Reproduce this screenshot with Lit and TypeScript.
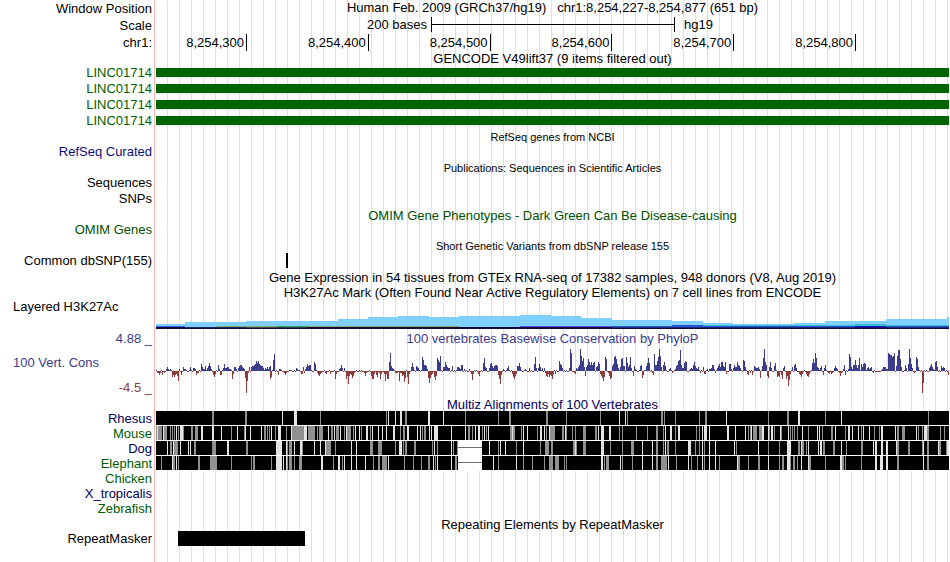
import { LitElement, html, svg, css, nothing } from "lit";
import { customElement, property } from "lit/decorators.js";
import { classMap } from "lit/directives/class-map.js";

/** Width of the browsed region in drawing units. */
const SPAN = 793;

/** Conservation scores: runs written as "start:score,score,...". */
const SCORES_UP = `5:1 10:2,4,2 14:2 23:2 27:4,2,2 34:4 37:3,3,2 45:7,4,2,2,5 50:1,3,5,8,5,2 62:6,2 66:1,3,7,3,3,4,4,2,2
78:4,4,2 82:3,5,6,6,4,3,2 93:4 95:4,5,5,6,7,10,8,10,7,6,5,5,3,1,3,2,4,2,4,5 116:1,11,17 123:2,2,1 134:1 140:3,2,1 147:4
149:2,4,7,5,6,6 158:9,7 183:2,3,6,3 188:3 233:9,18,5,3,2 250:1 255:4,8,1 257:4 260:5,4,3 266:14,11,6,6,5,2 281:13,11,9,15
287:4,4,9,6,4,3,3 296:5 300:1,4,4,3,2,6,6 308:2 313:2 327:8,13,4,3 333:3,7,8,5,3,5,6,6,5 347:2 351:3,5 361:5,5,8,4
369:2 373:3 378:7,14,3 382:3,7,4 386:3 388:3 403:10,7,6,3 413:3,22,18 420:3,2,4,6,22,15,10,13,4 430:4,6,12,9,6,9,6,8,9
440:4,5,9,7 449:14,12 456:5,7,14,15,12,7,3 464:4,12,13,5,5 470:14,8,4,6,14,3 478:5,2 484:5,6 489:1,5,8,13,8
498:17,6,6,10,14,22,15,4 507:6,9,5 513:2,3 519:2,5,6,10,11,21,6,3,3,8,10,9 534:2,3,2,6,9,5,3,2,4 547:4 551:2 553:2,2,3,6,6,2
561:3,5,7,4,9,9,5,4,9 573:7,7,2 577:3,6,4,4,9,6,5,3 587:11,10,4 598:5,4,3,3,4,2 606:5,13,22,9,6 613:4,9,3 618:5,8
627:3,5 635:1,4 638:6,7,3 656:8,12,8,18,13,4,3,1,3,5 668:3,6 678:3,5,3,2 687:2,6 692:2,17,14,4,2,6,6,11,6,3,6,13,1,7,4,7,8,7
711:3,4,2,3,4 726:2,4,4,4,2,2,18,17,16,16,14,15,18 740:5,15,21,21,12,4 749:6,3 752:7,22,13,7,3 760:14,12,4
773:3,5,7,4,2 779:9,10,4 785:5,3,4,3`;

const SCORES_DOWN = `1:2,2,4,2 6:4,1,2 16:6,4,6,4,3,5,10 25:4 40:4,2,2 57:4,6,3 64:4,4 76:8,3 89:7,22,10,2 114:8,6 122:4 127:1,2,4,2,1
137:1 145:3,3 148:2 161:2,4,5,3,2 169:2,3 174:3,1 179:8,3 190:8,5,13,5,3,4,7,5,2 208:2,5,2 214:1,5,8,8,3 220:4,6
223:2,8,3 228:3,10,3,8,8 239:2,2,2,1,10,2,2,5,4,11,7 251:6,13,3 272:7,12,7,4,3 278:6,9,5 315:3,9,3 322:3,5
342:4,8,13,4 356:3,6,8,5,3 389:2,5,6,3,6,4,5,8,3 399:3 409:1 418:2,3 429:5 444:3,5,7,10,6 452:2,5,8,7 477:5 486:7,4
496:2,4 516:2 544:2 548:3,3 559:2 570:3 591:3,4 594:2 596:4 604:7 611:5,7 621:6,5,6 625:4,8 630:8,5,15,9,3
643:3,4,6,3 650:3,5,6,3 667:4 672:2,3 675:3,2 683:2,5,2 689:4 716:1,2 720:1 723:1 758:2 766:22,12 792:4`;

/** Cells of an aligned species: shade, start and, when wider than one, width. */
const ALIGNED: { name: string; tone: string; cells?: string; gap?: boolean }[] = [
  {
    name: "Rhesus", tone: "navy",
    cells: `G56/2 G89/2 L126 L138/3 G164 G230 L232 L239 L244/2 G249/2 L272/2 L287 G309 G342 G353/2 G390/2 G410 G444 L463
      L469 G471 G505/2 G508 G519 G543 G549/2 L570 G612 G631/2 L642/2 G669 L685 G772`,
  },
  {
    name: "Mouse", tone: "green",
    cells: `G0 L1 G2/4 L7 G8/3 G14 G16 G18 L20 G22 L24/3 G27 G35/2 G39/3 L45/2 L56/2 L65 G75 L81 G88 L89 L94 L105 G108/2
      G111 G113 L115 G119 L122/3 G130 L135 G136/12 L148/3 G152/7 G161 G163/4 L172 G175/2 L178 G180/3 L184 G188 L190 G191/3
      G194 G197 L199 L203 G205 L210/2 G214 L216 L222 L226 L230 L237/2 G244 G247/2 L251/2 L261 L264 G266 G268/2 L273 L275
      L278/2 L280/2 L295 L309 G312/2 G316 L319 L322/2 G326 L328 G330 L332 G354/2 L356 G357/2 G365 L367 L371 G381 L384/2
      L388 G390 L393 G394/5 G406/2 L409 G410 G416 G419 G427/3 G439/2 L442 L445/3 L453/2 G463 G466 G480 G491 G500/2 G507
      L509 L514/2 G519 L522/2 G540 G543 L546 L548/3 L553 L571/2 L579 L589 G592 G594 L595 G597/4 G603/3 L606/2 L612 G613
      L615/2 G618 L624 G625 L632 G634 G636 G638 G641 L646 G652 L661 L663 G666 G675/2 L679 G689 L692/2 L696 L702 G705 L707
      L713 G718 G723 L725/2 L739 G741/2 G746/3 L760 G762 G766 L768/3 G771/2 G784 G788`,
  },
  {
    name: "Dog", tone: "navy", gap: true,
    cells: `L11 G14/2 L17 G18/3 G21 L24 L32 L34 G38/2 G56/4 L71/2 G90/2 L120/6 L130 G131 G133/3 L138 L144/2 G146 L158 L164
      L169 G170/5 G179 L195 L200 G214/3 G222/4 G239 L243/3 G247 G249/2 G258/2 G276 L278 G281 L295 G297 G301 L333 G342 L344
      L349 G360 L367 G384 G389/4 G395/2 G417/2 L419 G420 G427/3 L445/3 G454 G466 G475/3 L486 L496 G500/2 G507 L509 G511/2
      G519 L532/3 G539 G543 L546 G548 L553 L559 L578 G580 L602 G612 G623 L631/4 G642/2 L645 G646/2 G650 L652 L662 L664/2
      G667/2 G677/2 L685 G690 G705/2 L717 L719/2 L725/2 L730/2 L740 G741/2 G752/2 G766 L767 G771/2 L782 G783/2 G790 L791/2`,
  },
  {
    name: "Elephant", tone: "green", gap: true,
    cells: `G5 L16 G17/2 L20 G22 G42/2 G54 G55/6 G75 G95 G97/2 G115 L120/6 L127 L130 G131 G133/3 G138 G143/3 L165/2 G177
      L182/2 G186 L188 L195 L200 L209 G217 G222/2 G226 G227/4 L232 G248 G257 G265 G272/2 L277 G279 L281 L295 G299/2 L337
      G342 L360 G367 G376 G388 G393 G394/3 G399/4 G408 G410 L445/2 G448 G450/3 L464 G466 G476 L486 L496 G500/2 G505/6 L512
      G520 L532 G535 G541 L546 G548 L553 L559 G563 L581 G582/2 G592 G602/2 L612 G623 G626/2 L631/3 G634 G637/2 G641 L645
      L652 G653/2 G669 L684/2 G686/2 G689 G705 L719/2 L724/3 L730/2 G741/2 L767 G771/2`,
  },
  { name: "Chicken", tone: "green" },
  { name: "X_tropicalis", tone: "navy" },
  { name: "Zebrafish", tone: "green" },
];

/** Strongest H3K27Ac signal: [start, height above the track floor]. */
const SIGNAL: [number, number][] = [
  [0, 5], [29, 7], [90, 8], [182, 10], [212, 12], [242, 13], [273, 12], [303, 13], [364, 14], [395, 13], [425, 11],
  [456, 9], [516, 8], [547, 6], [577, 5], [638, 6], [669, 8], [730, 10], [791, 12],
];

/** Lower cell-line layers: [start, end, top, height, colour class]. */
const LAYERS: [number, number, number, number, string][] = [
  [0, 29, 27, 1, "blue"], [29, 90, 28, 1, "steel"], [60, 90, 27, 1, "olive"],
  [90, 121, 27, 2, "olive"], [121, 151, 27, 2, "leaf"], [151, 303, 27, 1, "olive"],
  [364, 456, 27, 1, "violet"], [456, 516, 27, 2, "royal"], [516, 547, 26, 3, "royal"],
  [547, 793, 26, 1, "teal"], [547, 793, 27, 2, "royal"],
  [699, 730, 25, 2, "teal"], [699, 730, 27, 2, "deep"],
];

const scores = (text: string): Map<number, number> => {
  const out = new Map<number, number>();
  for (const run of text.trim().split(/\s+/)) {
    const [start, list] = run.split(":");
    list.split(",").forEach((v, i) => out.set(Number(start) + i, Number(v)));
  }
  return out;
};

const bar = (x: number, y: number, w: number, h: number) => `M${x} ${y}h${w}v${h}h${-w}z`;

const shadePath = (cells: string, shade: string) =>
  cells.trim().split(/\s+/).filter((c) => c[0] === shade).map((c) => {
    const [x, w = "1"] = c.slice(1).split("/");
    return bar(Number(x), 0, Number(w), 14);
  }).join("");

@customElement("track-row")
class TrackRow extends LitElement {
  @property() label = "";
  @property() tone = "black";
  @property({ type: Boolean }) start = false;

  static styles = css`
    :host { display: grid; grid-template-columns: 154px minmax(0, 1fr); column-gap: 2px; }
    .label { padding-right: 2px; text-align: right; white-space: nowrap; }
    .start { padding-left: 13px; text-align: left; }
    .green { color: #005a00; }
    .gene { color: #006400; }
    .omim { color: #005000; }
    .navy { color: #00005a; }
    .curated { color: #0c0c78; }
    .up { color: #3c3c8c; }
  `;

  render() {
    return html`
      <div class=${classMap({ label: true, start: this.start, [this.tone]: true })}>
        <slot name="label">${this.label}</slot>
      </div>
      <div><slot></slot></div>`;
  }
}

@customElement("app-root")
class GenomeBrowser extends LitElement {
  static styles = css`
    :host {
      display: block;
      box-sizing: border-box;
      min-height: 100vh;
      padding-right: 1px;
      font: 13px/16px "Liberation Sans", Arial, sans-serif;
      color: #000;
      background:
        linear-gradient(#ffb4b4, #ffb4b4) 154px 0 / 1px 100% no-repeat,
        repeating-linear-gradient(90deg, transparent 0 11px, #dcdcf5 11px 12px) 156px 0 no-repeat,
        #fff;
    }
    svg { display: block; width: 100%; shape-rendering: crispEdges; }
    .head { line-height: 17px; }
    .position { line-height: 15px; text-align: center; white-space: nowrap; }
    .title { line-height: 15px; white-space: nowrap; }
    .center { padding-top: 2px; line-height: 13px; text-align: center; }
    .center.first { line-height: 12px; }
    .title.first { line-height: 14px; }
    .center.small { font-size: 11px; padding-top: 1px; line-height: 14px; }
    .center.up { padding-top: 0; line-height: 15px; }
    .omim { color: #005000; }
    .navy { color: #00005a; }
    .up { color: #3c3c8c; }
    .scale { display: grid; grid-template-columns: 275fr 244fr 274fr; line-height: 15px; }
    .bases { padding-right: 4px; text-align: right; }
    .assembly { padding-left: 9px; }
    .span { display: flex; align-items: center; border: solid #000; border-width: 0 1px; }
    .rule { flex: 1; height: 1px; background: #000; }
    .ruler { display: grid; grid-template-columns: 455fr repeat(5, 609fr) 465fr; height: 15px; line-height: 17px; }
    .tick { padding-right: 2px; border-right: 1px solid #000; text-align: right; }
    .gene { margin-top: 3px; height: 9px; background: #006400; }
    .signal { height: 32px; }
    .cons { height: 51px; }
    .name { display: block; padding: 9px 0 9px 13px; text-align: left; }
    .floor { display: block; color: #8c3c3c; text-align: right; }
    .species { line-height: 15px; }
    .f-sky { fill: #80d0ff; }
    .f-blue { fill: #3366ff; }
    .f-steel { fill: #265c9c; }
    .f-olive { fill: #84ac70; }
    .f-leaf { fill: #409a68; }
    .f-violet { fill: #5050f0; }
    .f-royal { fill: #2458d0; }
    .f-teal { fill: #38bcd8; }
    .f-deep { fill: #1018c8; }
    .f-floor { fill: #140838; }
    .f-up { fill: #3c3c8c; }
    .f-down { fill: #8c3c3c; }
    .f-light { fill: #e4e4e4; }
    .f-grey { fill: #909090; }
    .f-white { fill: #fff; }
    .f-gap { fill: #707070; }
  `;

  private plot(height: number, body: unknown) {
    return html`<svg height=${height} viewBox="0 0 ${SPAN} ${height}"
      preserveAspectRatio="none" aria-hidden="true">${body}</svg>`;
  }

  private title(text: string, cls = "", label = "", tone = "black") {
    return html`<track-row class=${classMap({ title: true, first: cls.includes("first") })}
      label=${label} tone=${tone}><div class=${"center " + cls}>${text}</div></track-row>`;
  }

  private signal() {
    const sky = SIGNAL.map(([x, h], i) => bar(x, 30 - h, (SIGNAL[i + 1]?.[0] ?? SPAN) - x, h)).join("");
    return this.plot(30, svg`
      <path class="f-sky" d=${sky}></path>
      <path class="f-floor" d=${bar(0, 28, SPAN, 2)}></path>
      ${LAYERS.map(([a, b, y, h, c]) => svg`<path class=${"f-" + c} d=${bar(a, y, b - a, h)}></path>`)}
      <path class="f-floor" d=${bar(0, 28, SPAN, 2)} opacity="0.6"></path>
      <path class="f-floor" d=${bar(0, 29, SPAN, 1)}></path>`);
  }

  private conservation() {
    const up = scores(SCORES_UP);
    const down = scores(SCORES_DOWN);
    let above = "";
    let below = "";
    for (let x = 0; x < SPAN; x++) {
      const u = up.get(x);
      const d = down.get(x);
      if (u) above += bar(x, 25 - u, 1, u);
      if (d) below += bar(x, 25, 1, d);
      if (!u && !d) {
        if ((x * 7) % 5 < 2) above += bar(x, 24, 1, 1);
        else below += bar(x, 25, 1, 1);
      }
    }
    return this.plot(51, svg`<path class="f-up" d=${above}></path><path class="f-down" d=${below}></path>`);
  }

  private alignment(cells: string, gap = false) {
    return this.plot(15, svg`
      <path class="f-white" d=${bar(0, 14, SPAN, 1)}></path>
      <path d=${bar(0, 0, SPAN, 14)}></path>
      <path class="f-grey" d=${shadePath(cells, "G")}></path>
      <path class="f-light" d=${shadePath(cells, "L")}></path>
      ${gap ? svg`<path class="f-white" d=${bar(302, 0, 24, 14)}></path>
        <path class="f-gap" d=${bar(302, 6, 24, 1)}></path>` : nothing}`);
  }

  render() {
    const ticks = ["8,254,300", "8,254,400", "8,254,500", "8,254,600", "8,254,700", "8,254,800"];
    return html`
      <main>
        <track-row class="head" label="Window Position">
          <div class="position">Human Feb. 2009 (GRCh37/hg19)&nbsp;&nbsp; chr1:8,254,227-8,254,877 (651 bp)</div>
        </track-row>
        <track-row class="head" label="Scale">
          <div class="scale">
            <div class="bases">200 bases</div>
            <div class="span"><div class="rule"></div></div>
            <div class="assembly">hg19</div>
          </div>
        </track-row>
        <track-row class="head" label="chr1:">
          <div class="ruler">${ticks.map((t) => html`<div class="tick">${t}</div>`)}</div>
        </track-row>

        ${this.title("GENCODE V49lift37 (9 items filtered out)", "first")}
        ${[0, 1, 2, 3].map(() => html`
          <track-row label="LINC01714" tone="gene"><div class="gene"></div></track-row>`)}

        ${this.title("RefSeq genes from NCBI", "small")}
        <track-row label="RefSeq Curated" tone="curated"></track-row>

        ${this.title("Publications: Sequences in Scientific Articles", "small")}
        <track-row label="Sequences"></track-row>
        <track-row label="SNPs"></track-row>

        ${this.title("OMIM Gene Phenotypes - Dark Green Can Be Disease-causing", "omim")}
        <track-row label="OMIM Genes" tone="omim"></track-row>

        ${this.title("Short Genetic Variants from dbSNP release 155", "small")}
        <track-row label="Common dbSNP(155)">
          ${this.plot(15, svg`<path d=${bar(130, 0, 2, 15)}></path>`)}
        </track-row>

        ${this.title("Gene Expression in 54 tissues from GTEx RNA-seq of 17382 samples, 948 donors (V8, Aug 2019)")}
        ${this.title("H3K27Ac Mark (Often Found Near Active Regulatory Elements) on 7 cell lines from ENCODE")}
        <track-row class="signal" label="Layered H3K27Ac" start>${this.signal()}</track-row>

        ${this.title("100 vertebrates Basewise Conservation by PhyloP", "up", "4.88 _", "up")}
        <track-row class="cons" tone="up">
          <div slot="label">
            <span class="name">100 Vert. Cons</span>
            <span class="floor">-4.5 _</span>
          </div>
          ${this.conservation()}
        </track-row>

        ${this.title("Multiz Alignments of 100 Vertebrates", "first navy")}
        ${ALIGNED.map((s) => html`
          <track-row class="species" label=${s.name} tone=${s.tone}>
            ${s.cells ? this.alignment(s.cells, s.gap) : nothing}
          </track-row>`)}

        ${this.title("Repeating Elements by RepeatMasker")}
        <track-row label="RepeatMasker">
          ${this.plot(15, svg`<path d=${bar(22, 0, 127, 15)}></path>`)}
        </track-row>
      </main>`;
  }
}
